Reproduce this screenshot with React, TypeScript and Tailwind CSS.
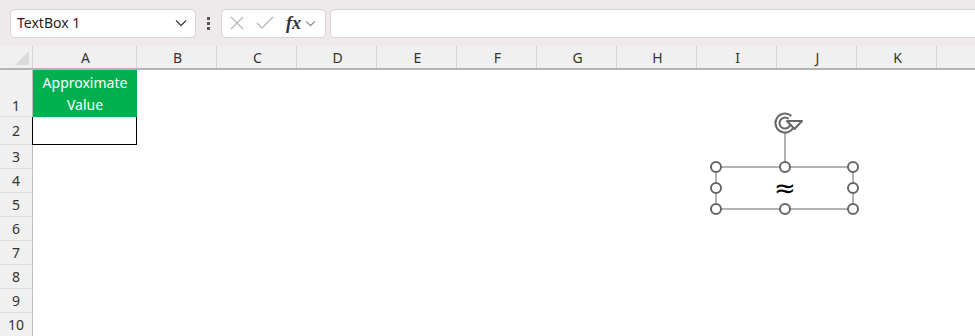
import React from 'react';

const cols = ['B', 'C', 'D', 'E', 'F', 'G', 'H', 'I', 'J', 'K'];
const rows = [3, 4, 5, 6, 7, 8, 9, 10];

const Handle = ({ cx, cy }: { cx: number; cy: number }) => (
    <circle cx={cx} cy={cy} r={5} fill="white" stroke="#666" strokeWidth={2} />
);

const Chevron = ({ className }: { className: string }) => (
    <svg className={className} viewBox="0 0 12 8" fill="none" stroke="currentColor" strokeWidth={1.3}>
        <path d="M1 1.5 L6 6.5 L11 1.5" />
    </svg>
);

export default function App() {
    return (
        <div className="relative w-[975px] h-[336px] overflow-hidden bg-white font-['Noto_Sans','Open_Sans',sans-serif] text-[#222]">
            {/* formula bar */}
            <div className="flex items-center h-[46px] bg-[#eeeaec] pl-[10px]">
                <div className="flex items-center justify-between w-[186px] h-[29px] bg-white rounded-[5px] border border-[#d9d3d5] pl-[6px] pr-[8px]">
                    <span className="text-[14px] leading-none text-[#1f1f1f]">TextBox 1</span>
                    <Chevron className="w-[12px] h-[8px] text-[#444]" />
                </div>
                <div className="flex flex-col gap-[2px] mx-[11px]">
                    <span className="w-[3px] h-[3px] bg-[#555]" />
                    <span className="w-[3px] h-[3px] bg-[#555]" />
                    <span className="w-[3px] h-[3px] bg-[#555]" />
                </div>
                <div className="flex items-center w-[105px] h-[29px] bg-white rounded-[5px] border border-[#d9d3d5] pl-[7px]">
                    <svg className="w-[16px] h-[16px]" viewBox="0 0 16 16" stroke="#b8b8b8" strokeWidth={1.3}>
                        <path d="M2 2 L14 14 M14 2 L2 14" />
                    </svg>
                    <svg className="w-[18px] h-[16px] ml-[11px]" viewBox="0 0 18 16" fill="none" stroke="#b8b8b8" strokeWidth={1.3}>
                        <path d="M1 8 L6 13 L17 2" />
                    </svg>
                    <span className="ml-[12px] font-['Liberation_Serif',serif] italic font-bold text-[18px] leading-none text-[#333]">fx</span>
                    <Chevron className="ml-[4px] w-[11px] h-[7px] text-[#888]" />
                </div>
                <div className="flex-1 h-[29px] ml-[4px] bg-white rounded-l-[5px] border border-r-0 border-[#d9d3d5]" />
            </div>

            {/* sheet */}
            <div className="flex flex-col">
                <div className="flex h-[24px] bg-[#f0f0f0] border-b-2 border-[#b4b4b4] text-[14px] text-[#333]">
                    <div className="relative w-[33px] border-r border-[#d4d4d4]">
                        <div className="absolute right-[3px] bottom-[3px] w-0 h-0 border-l-[14px] border-l-transparent border-b-[14px] border-b-[#dadada]" />
                    </div>
                    <div className="flex items-center justify-center w-[104px] pl-[2px] border-r border-[#d4d4d4]">A</div>
                    {cols.map((c) => (
                        <div key={c} className="flex items-center justify-center w-[80px] pl-[2px] border-r border-[#d4d4d4]">
                            {c}
                        </div>
                    ))}
                    <div className="flex-1" />
                </div>

                <div className="flex h-[47px]">
                    <div className="flex items-end justify-center w-[33px] pb-0 bg-[#f0f0f0] border-r border-[#bdbdbd] border-b border-b-[#dcdcdc] text-[14px] text-[#333]">1</div>
                    <div className="flex flex-col items-center justify-center w-[104px] bg-[#00b050] text-white text-[14px] leading-[22px]">
                        <span>Approximate</span>
                        <span>Value</span>
                    </div>
                </div>
                <div className="flex h-[28px]">
                    <div className="flex items-center justify-center w-[33px] bg-[#f0f0f0] border-r border-[#bdbdbd] border-b border-b-[#dcdcdc] text-[14px] text-[#333]">2</div>
                    <div className="w-[105px] -ml-px border border-t-0 border-black" />
                </div>
                {rows.map((r) => (
                    <div key={r} className="flex h-[24px]">
                        <div className="flex items-center justify-center w-[33px] bg-[#f0f0f0] border-r border-[#bdbdbd] border-b border-b-[#dcdcdc] text-[14px] text-[#333]">
                            {r}
                        </div>
                    </div>
                ))}
            </div>

            {/* selected text box */}
            <div className="absolute left-[705px] top-[110px] w-[160px] h-[110px]">
                <svg className="absolute inset-0" width={160} height={110} viewBox="0 0 160 110">
                    <rect x={11} y={57} width={137} height={42} fill="none" stroke="#666" strokeWidth={1} />
                    <line x1={80} y1={22} x2={80} y2={57} stroke="#666" strokeWidth={1} />
                    <path d="M85 7.5 A7.5 7.5 0 1 0 87.5 13" fill="none" stroke="#666" strokeWidth={6} />
                    <path d="M85 7.5 A7.5 7.5 0 1 0 87.5 13" fill="none" stroke="white" strokeWidth={2} />
                    <path d="M82 11 L97 11 L89.5 19 Z" fill="white" stroke="#666" strokeWidth={2} strokeLinejoin="round" />
                    <Handle cx={11} cy={57} />
                    <Handle cx={80} cy={57} />
                    <Handle cx={148} cy={57} />
                    <Handle cx={11} cy={78} />
                    <Handle cx={148} cy={78} />
                    <Handle cx={11} cy={99} />
                    <Handle cx={80} cy={99} />
                    <Handle cx={148} cy={99} />
                </svg>
                <div className="absolute left-[60px] top-[64px] w-[40px] h-[28px] flex items-center justify-center text-[26px] leading-none text-black font-['DejaVu_Sans',sans-serif]">
                    ≈
                </div>
            </div>
        </div>
    );
}
